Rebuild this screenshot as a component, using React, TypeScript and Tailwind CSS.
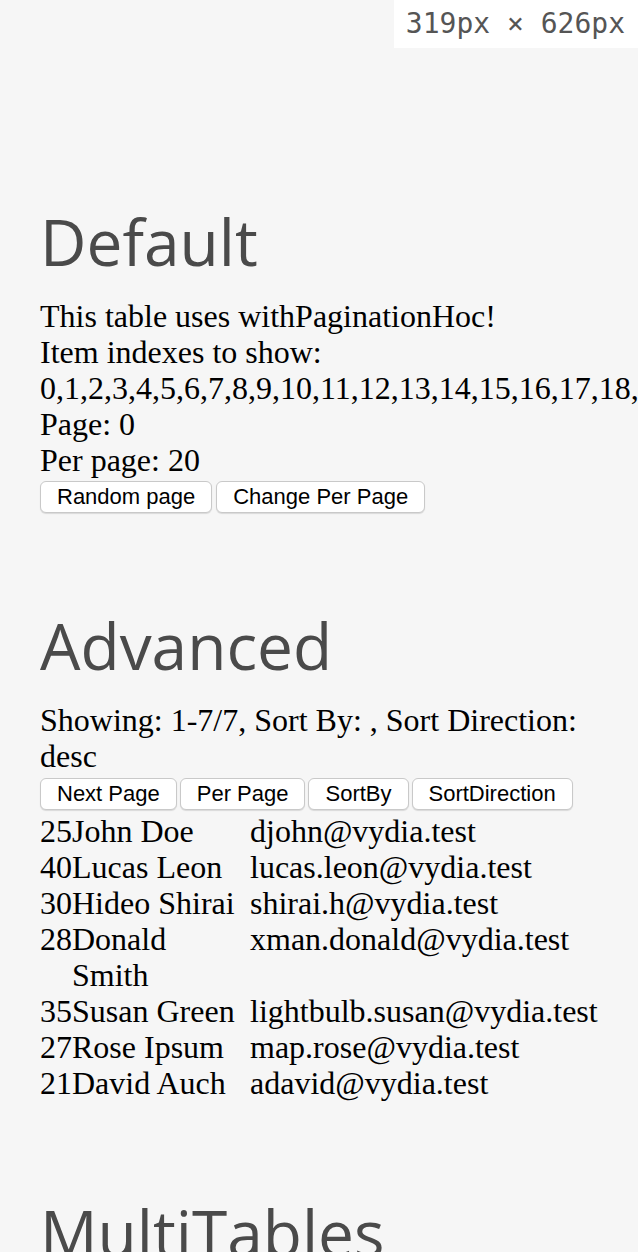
import React from "react";

type Person = { age: number; name: string; email: string };

const PEOPLE: Person[] = [
  { age: 25, name: "John Doe", email: "djohn@vydia.test" },
  { age: 40, name: "Lucas Leon", email: "lucas.leon@vydia.test" },
  { age: 30, name: "Hideo Shirai", email: "shirai.h@vydia.test" },
  { age: 28, name: "Donald Smith", email: "xman.donald@vydia.test" },
  { age: 35, name: "Susan Green", email: "lightbulb.susan@vydia.test" },
  { age: 27, name: "Rose Ipsum", email: "map.rose@vydia.test" },
  { age: 21, name: "David Auch", email: "adavid@vydia.test" },
];

const INDEXES = Array.from({ length: 20 }, (_, i) => i).join(",");

function Heading({ children }: { children: React.ReactNode }) {
  return (
    <h1 className="text-[64px] leading-[64px] font-normal text-[#4a4a4a] font-['Open_Sans',sans-serif]">
      {children}
    </h1>
  );
}

function Button({ children }: { children: React.ReactNode }) {
  return (
    <button className="h-[32px] px-[16px] rounded-[6px] border border-[#c9c9c9] bg-white text-[22px] leading-none text-black shadow-[0_1px_1px_rgba(0,0,0,0.12)] font-['Liberation_Sans',Arial,sans-serif]">
      {children}
    </button>
  );
}

export default function App() {
  return (
    <div className="relative min-h-screen w-full overflow-hidden bg-[#f6f6f6] font-['Liberation_Serif','Times_New_Roman',serif] text-black">
      {/* viewport size badge */}
      <div className="absolute top-0 right-0 h-[48px] flex items-center pl-[12px] pr-[13px] bg-white text-[28px] text-[#555] font-['DejaVu_Sans_Mono',monospace]">
        319px × 626px
      </div>

      <div className="px-[40px] pt-[210px]">
        <section>
          <Heading>Default</Heading>
          <div className="mt-[24px] text-[32px] leading-[36px]">
            <div>This table uses withPaginationHoc!</div>
            <div>Item indexes to show:</div>
            <div className="whitespace-nowrap">{INDEXES}</div>
            <div>Page: 0</div>
            <div>Per page: 20</div>
          </div>
          <div className="mt-[3px] flex gap-[4px]">
            <Button>Random page</Button>
            <Button>Change Per Page</Button>
          </div>
        </section>

        <section className="mt-[101px]">
          <Heading>Advanced</Heading>
          <div className="mt-[24px] text-[32px] leading-[36px]">
            Showing: 1-7/7, Sort By: , Sort Direction: desc
          </div>
          <div className="mt-[4px] flex gap-[3px]">
            <Button>Next Page</Button>
            <Button>Per Page</Button>
            <Button>SortBy</Button>
            <Button>SortDirection</Button>
          </div>
          <div className="mt-[3px] grid grid-cols-[32px_178px_1fr] text-[32px] leading-[36px]">
            {PEOPLE.map((p) => (
              <React.Fragment key={p.email}>
                <div>{p.age}</div>
                <div className="pr-[8px]">{p.name}</div>
                <div className="whitespace-nowrap">{p.email}</div>
              </React.Fragment>
            ))}
          </div>
        </section>

        <section className="mt-[100px]">
          <Heading>MultiTables</Heading>
        </section>
      </div>
    </div>
  );
}
